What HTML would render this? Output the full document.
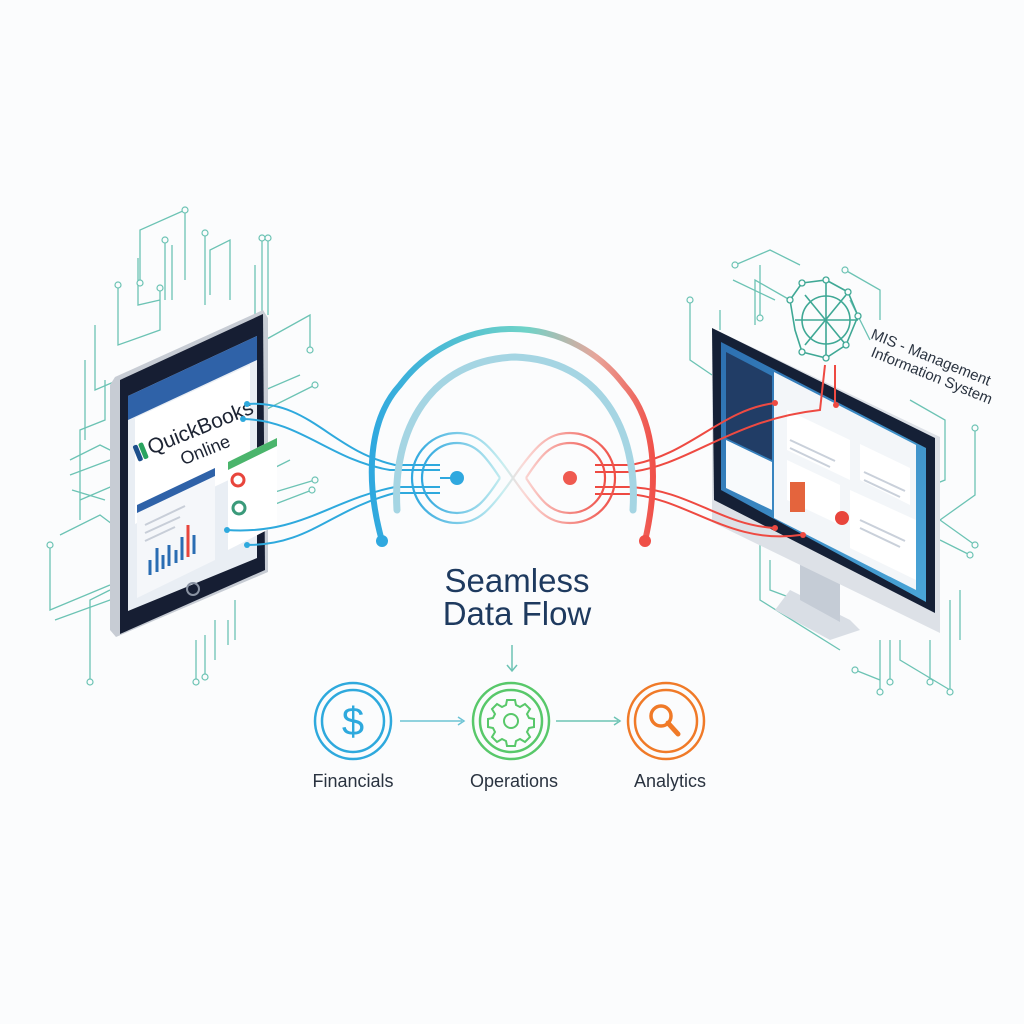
<!DOCTYPE html>
<html><head><meta charset="utf-8"><style>
html,body{margin:0;padding:0;background:#fbfcfd;}
svg{display:block}
text{font-family:"Liberation Sans",sans-serif}
</style></head><body>
<svg width="1024" height="1024" viewBox="0 0 1024 1024" xmlns="http://www.w3.org/2000/svg">
<defs>
<linearGradient id="arc" x1="0" y1="0" x2="1" y2="0">
<stop offset="0" stop-color="#2fa8df"/><stop offset="0.55" stop-color="#6fd3c8"/><stop offset="0.8" stop-color="#e8a59a"/><stop offset="1" stop-color="#f0514a"/></linearGradient>
<linearGradient id="inf" x1="0" y1="0" x2="1" y2="0">
<stop offset="0" stop-color="#2fa8df"/><stop offset="0.45" stop-color="#c8eef0"/><stop offset="0.55" stop-color="#fbd9d6"/><stop offset="1" stop-color="#ef4f47"/></linearGradient>
<linearGradient id="scr" x1="0" y1="0" x2="1" y2="1"><stop offset="0" stop-color="#2d6fb0"/><stop offset="1" stop-color="#4aa6d8"/></linearGradient>
</defs>
<rect width="1024" height="1024" fill="#fbfcfd"/>

<g fill="none" stroke="#6cc3b4" stroke-width="1.3">
<path d="M118 287 V345 L160 330 V290"/><path d="M95 325 V390 L130 375"/><path d="M85 360 V440"/><path d="M105 380 V420 L80 430 V520"/>
<path d="M140 285 V230 L185 210 V280"/><path d="M138 258 V305 L160 300"/><path d="M165 300 V240"/><path d="M172 300 V245"/>
<path d="M205 235 V305"/><path d="M210 295 V250 L230 240 V300"/><path d="M255 265 V330"/><path d="M262 240 V320"/><path d="M268 240 V315"/>
<path d="M60 535 L100 515 L120 530 L140 520"/><path d="M50 545 V610 L110 585"/><path d="M55 620 L110 600 L120 600"/><path d="M90 680 V600 L110 590"/>
<path d="M70 460 L100 445 L120 455"/><path d="M70 475 L110 460"/><path d="M72 490 L105 500"/><path d="M80 500 L115 485"/>
<path d="M196 640 V680"/><path d="M205 635 V675"/><path d="M215 620 V660"/><path d="M228 620 V645"/><path d="M235 600 V640"/>
<path d="M265 340 L310 315 V350"/><path d="M265 390 L300 375"/><path d="M265 410 L315 385"/><path d="M270 470 L290 460"/><path d="M265 495 L315 480"/><path d="M265 508 L312 490"/>
</g>
<g fill="#fbfcfd" stroke="#6cc3b4" stroke-width="1.2">
<circle cx="118" cy="285" r="3"/><circle cx="160" cy="288" r="3"/><circle cx="140" cy="283" r="3"/><circle cx="185" cy="210" r="3"/><circle cx="165" cy="240" r="3"/><circle cx="205" cy="233" r="3"/><circle cx="262" cy="238" r="3"/><circle cx="268" cy="238" r="3"/><circle cx="310" cy="350" r="3"/><circle cx="315" cy="385" r="3"/><circle cx="90" cy="682" r="3"/><circle cx="50" cy="545" r="3"/><circle cx="196" cy="682" r="3"/><circle cx="205" cy="677" r="3"/><circle cx="315" cy="480" r="3"/><circle cx="312" cy="490" r="3"/>
</g>

<g fill="none" stroke="#6cc3b4" stroke-width="1.3">
<path d="M735 265 L770 250 L800 265"/><path d="M733 280 L775 300"/><path d="M690 300 V360 L712 375"/><path d="M720 310 V330"/>
<path d="M760 320 V265"/><path d="M755 325 V280 L790 300"/><path d="M845 270 L880 290 V320"/><path d="M850 300 L870 340"/>
<path d="M910 400 L945 420 V480 L920 490 V510"/><path d="M975 430 V495 L940 520"/><path d="M940 520 L975 545"/><path d="M940 540 L970 555"/>
<path d="M880 640 V690"/><path d="M890 640 V680"/><path d="M900 640 V660 L950 690"/><path d="M930 640 V680"/><path d="M950 600 V690"/><path d="M960 590 V640"/>
<path d="M760 540 V600 L840 650"/><path d="M770 560 V590 L810 605"/><path d="M855 670 L880 680"/>
</g>
<g fill="#fbfcfd" stroke="#6cc3b4" stroke-width="1.2">
<circle cx="735" cy="265" r="3"/><circle cx="690" cy="300" r="3"/><circle cx="760" cy="318" r="3"/><circle cx="845" cy="270" r="3"/><circle cx="975" cy="428" r="3"/><circle cx="975" cy="545" r="3"/><circle cx="970" cy="555" r="3"/><circle cx="880" cy="692" r="3"/><circle cx="890" cy="682" r="3"/><circle cx="950" cy="692" r="3"/><circle cx="930" cy="682" r="3"/><circle cx="855" cy="670" r="3"/>
</g>

<g fill="none" stroke="#3fa895" stroke-width="1.6">
<polygon points="802,283 826,280 848,292 858,316 846,345 826,358 802,352 795,330 790,300"/>
<circle cx="826" cy="320" r="24"/><path d="M826 282 V358 M795 320 H858 M805 295 L846 345 M846 295 L805 345"/>
</g>
<g fill="#fbfcfd" stroke="#3fa895" stroke-width="1.3"><circle cx="802" cy="283" r="3"/><circle cx="826" cy="280" r="3"/><circle cx="848" cy="292" r="3"/><circle cx="858" cy="316" r="3"/><circle cx="846" cy="345" r="3"/><circle cx="826" cy="358" r="3"/><circle cx="802" cy="352" r="3"/><circle cx="790" cy="300" r="3"/></g>
<text x="870" y="338" font-size="15" fill="#2a3340" transform="rotate(22 870 338)">MIS - Management</text>
<text x="870" y="356" font-size="15" fill="#2a3340" transform="rotate(22 870 356)">Information System</text>

<!-- tablet -->
<polygon points="115,377 263,310 268,318 268,572 116,637 110,630 110,385" fill="#c7ccd4"/>
<polygon points="120,380 263,314 265,570 120,634" fill="#161e33"/>
<polygon points="128,396 257,336 257,558 128,611" fill="#e9eef4"/>
<polygon points="128,396 257,336 257,360 128,420" fill="#2f62a8"/>
<polygon points="135,418 250,365 250,470 135,524" fill="#ffffff"/>
<polygon points="137,505 215,468 215,560 137,598" fill="#f5f7fa"/>
<polygon points="137,505 215,468 215,476 137,513" fill="#2f62a8"/>
<g stroke="#c8ced8" stroke-width="2"><line x1="145" y1="525" x2="185" y2="506"/><line x1="145" y1="533" x2="180" y2="517"/><line x1="145" y1="541" x2="175" y2="527"/></g>
<g stroke-width="3"><line x1="150" y1="575" x2="150" y2="560" stroke="#2a6db3"/><line x1="157" y1="572" x2="157" y2="548" stroke="#2a6db3"/><line x1="163" y1="569" x2="163" y2="555" stroke="#2a6db3"/><line x1="169" y1="566" x2="169" y2="545" stroke="#2a6db3"/><line x1="176" y1="563" x2="176" y2="550" stroke="#2a6db3"/><line x1="182" y1="560" x2="182" y2="537" stroke="#2a6db3"/><line x1="188" y1="557" x2="188" y2="525" stroke="#e8453c"/><line x1="194" y1="554" x2="194" y2="535" stroke="#2a6db3"/></g>
<polygon points="228,462 277,438 277,525 228,550" fill="#ffffff"/>
<polygon points="228,462 277,438 277,446 228,470" fill="#4bb56c"/>
<circle cx="238" cy="480" r="6" fill="none" stroke="#e8453c" stroke-width="3"/><circle cx="239" cy="508" r="6" fill="none" stroke="#3a9a7a" stroke-width="3"/>
<circle cx="193" cy="589" r="6" fill="none" stroke="#8a93a3" stroke-width="2"/>
<g transform="translate(138,460) rotate(-22)"><rect x="0" y="-15" width="5" height="17" rx="2" fill="#1d4f8c"/><rect x="6" y="-15" width="5" height="17" rx="2" fill="#2aa35f"/>
<text x="14" y="0" font-size="21" fill="#1d2433">QuickBooks</text>
<text x="40" y="22" font-size="18" fill="#1d2433">Online</text></g>

<!-- monitor -->
<polygon points="790,590 850,620 860,630 830,640 775,610" fill="#d9dee5"/>
<polygon points="800,560 840,580 840,622 800,600" fill="#c5ccd6"/>
<polygon points="712,328 940,437 940,633 712,522" fill="#dde1e7"/>
<polygon points="712,328 935,438 935,613 714,500" fill="#152036"/>
<polygon points="721,342 926,448 926,602 721,490" fill="url(#scr)"/>
<polygon points="774,372 916,445 916,590 774,518" fill="#f3f6f9"/>
<polygon points="726,352 772,376 772,460 726,438" fill="#213d66"/>
<polygon points="726,440 772,462 772,510 726,488" fill="#f8fafc"/>
<polygon points="787,410 850,440 850,480 787,450" fill="#fff"/>
<polygon points="860,444 910,468 910,505 860,480" fill="#fff"/>
<polygon points="787,460 840,485 840,525 787,500" fill="#fff"/>
<polygon points="850,490 916,520 916,580 850,548" fill="#fff"/>
<g stroke="#c9d0da" stroke-width="2"><line x1="790" y1="440" x2="835" y2="461"/><line x1="790" y1="448" x2="830" y2="467"/><line x1="864" y1="472" x2="905" y2="491"/><line x1="864" y1="480" x2="900" y2="497"/><line x1="860" y1="520" x2="905" y2="541"/><line x1="860" y1="528" x2="900" y2="547"/></g>
<rect x="790" y="482" width="15" height="30" fill="#e4643d"/>
<circle cx="842" cy="518" r="7" fill="#e8453c"/>

<g fill="none" stroke="#2ea9dd" stroke-width="2">
<path d="M247 404 C310 400 330 450 395 465 H440"/><path d="M243 419 C300 420 330 460 390 470 H440"/>
<path d="M227 530 C300 535 330 500 395 487 H440"/><path d="M247 545 C310 545 330 510 395 493 H440"/>
</g>
<g fill="#2ea9dd"><circle cx="247" cy="404" r="3"/><circle cx="243" cy="419" r="3"/><circle cx="227" cy="530" r="3"/><circle cx="247" cy="545" r="3"/></g>
<g fill="none" stroke="#ee4a42" stroke-width="2">
<path d="M595 465 H630 C690 455 720 410 775 403"/><path d="M595 472 H630 C690 465 730 420 820 410 L825 365"/>
<path d="M595 487 H630 C690 490 720 525 775 528"/><path d="M595 494 H630 C690 500 730 545 800 535"/>
<path d="M835 365 V405"/>
</g>
<g fill="#ee4a42"><circle cx="775" cy="403" r="3"/><circle cx="775" cy="528" r="3"/><circle cx="803" cy="535" r="3"/><circle cx="836" cy="405" r="3"/></g>

<path d="M382 541 C365 480 368 420 400 385 A140 140 0 0 1 624 385 C656 420 659 480 645 541" fill="none" stroke="url(#arc)" stroke-width="6" stroke-linecap="round"/>
<circle cx="382" cy="541" r="6" fill="#2fa8df"/><circle cx="645" cy="541" r="6" fill="#ef4f47"/>
<path d="M397 510 C392 430 430 360 515 357 C600 360 638 430 633 510" fill="none" stroke="#a5d5e3" stroke-width="7" stroke-linecap="round"/>
<g fill="none" stroke="url(#inf)" stroke-width="2.2">
<path d="M513 478 C490 445 478 433 457 433 A45 45 0 0 0 457 523 C478 523 490 511 513 478 C536 445 548 433 570 433 A45 45 0 0 1 570 523 C548 523 536 511 513 478"/>
<path d="M500 478 C485 455 475 443 457 443 A35 35 0 0 0 457 513 C475 513 485 501 500 478 M526 478 C541 455 551 443 570 443 A35 35 0 0 1 570 513 C551 513 541 501 526 478"/>
</g>
<line x1="440" y1="478" x2="457" y2="478" stroke="#2fa8df" stroke-width="2"/>
<circle cx="457" cy="478" r="7" fill="#2fa8df"/><circle cx="570" cy="478" r="7" fill="#ef5a50"/>

<text x="517" y="592" font-size="33" fill="#1e3a5f" text-anchor="middle">Seamless</text>
<text x="517" y="625" font-size="33" fill="#1e3a5f" text-anchor="middle">Data Flow</text>
<line x1="512" y1="645" x2="512" y2="670" stroke="#6cc3b4" stroke-width="1.5"/><path d="M507 665 L512 671 L517 665" fill="none" stroke="#6cc3b4" stroke-width="1.5"/>

<g fill="none" stroke-width="2.5">
<circle cx="353" cy="721" r="38" stroke="#2ea9dd"/><circle cx="353" cy="721" r="31" stroke="#2ea9dd"/>
<circle cx="511" cy="721" r="38" stroke="#58c86a"/><circle cx="511" cy="721" r="31" stroke="#58c86a"/>
<circle cx="666" cy="721" r="38" stroke="#f07a28"/><circle cx="666" cy="721" r="31" stroke="#f07a28"/>
</g>
<text x="353" y="735" font-size="40" fill="#2ea9dd" text-anchor="middle">$</text>
<g fill="none" stroke="#58c86a" stroke-width="2">
<path d="M507 700 h8 l1 5 l4 2 l5 -3 l5 5 l-3 5 l2 4 l5 1 v8 l-5 1 l-2 4 l3 5 l-5 5 l-5 -3 l-4 2 l-1 5 h-8 l-1 -5 l-4 -2 l-5 3 l-5 -5 l3 -5 l-2 -4 l-5 -1 v-8 l5 -1 l2 -4 l-3 -5 l5 -5 l5 3 l4 -2 z"/>
<circle cx="511" cy="721" r="7"/></g>
<circle cx="661" cy="716" r="10" fill="none" stroke="#f07a28" stroke-width="3.5"/><line x1="668" y1="723" x2="678" y2="734" stroke="#f07a28" stroke-width="5" stroke-linecap="round"/>
<line x1="400" y1="721" x2="462" y2="721" stroke="#6cc3d4" stroke-width="1.5"/><path d="M458 717 L464 721 L458 725" fill="none" stroke="#6cc3d4" stroke-width="1.5"/>
<line x1="556" y1="721" x2="618" y2="721" stroke="#6cc3b4" stroke-width="1.5"/><path d="M614 717 L620 721 L614 725" fill="none" stroke="#6cc3b4" stroke-width="1.5"/>
<text x="353" y="787" font-size="18" fill="#2a3340" text-anchor="middle">Financials</text>
<text x="514" y="787" font-size="18" fill="#2a3340" text-anchor="middle">Operations</text>
<text x="670" y="787" font-size="18" fill="#2a3340" text-anchor="middle">Analytics</text>
</svg>
</body></html>
